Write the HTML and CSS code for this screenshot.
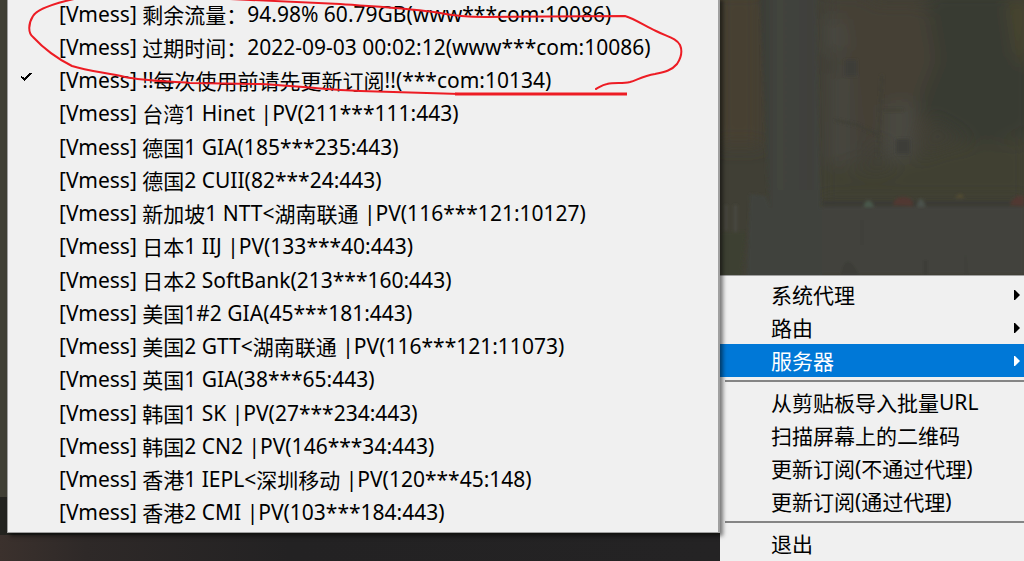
FILE: index.html
```html
<!DOCTYPE html>
<html lang="zh-CN">
<head>
<meta charset="utf-8">
<meta name="viewport" content="width=device-width, initial-scale=1">
<title>服务器</title>
<link rel="stylesheet" href="styles.css">
</head>
<body>
<main class="desktop">
  <svg class="wallpaper" viewBox="0 0 1024 561" preserveAspectRatio="none" aria-hidden="true">
    <defs>
      <filter id="soft" x="-10%" y="-10%" width="120%" height="120%"><feGaussianBlur stdDeviation="9"/></filter>
      <filter id="fine"><feGaussianBlur stdDeviation="1.5"/></filter>
      <linearGradient id="floor"><stop offset="0" stop-color="#3b312d"/><stop offset=".12" stop-color="#2e2928"/><stop offset=".4" stop-color="#232223"/><stop offset="1" stop-color="#242324"/></linearGradient>
      <linearGradient id="trunk"><stop offset="0" stop-color="#3a3c35"/><stop offset=".3" stop-color="#42443e"/><stop offset=".8" stop-color="#3f403b"/><stop offset="1" stop-color="#42443d"/></linearGradient>
    </defs>
    <rect width="1024" height="561" fill="#403f35"/>
    <g filter="url(#soft)">
      <rect x="715" y="-10" width="48" height="155" fill="#474132"/>
      <path d="M822-10h50l-4 70 8 100-55 10z" fill="#434139"/>
      <path d="M832 0h90l30 60-35 90-50-10z" fill="#444034"/>
      <path d="M824 20l18-2 6 30-18 8zM834 75l14-5v100l-14-10zM885 105l28-5v60h-28z" fill="#484a43"/>
      <path d="M925-10h110v145l-60 10-58-35 20-50z" fill="#383a33"/>
      <path d="M1008 0h20v70l-12-15z" fill="#4c462f"/>
      <path d="M820 165l60 5 70-25 80-5v60H820z" fill="#413f32"/>
    </g>
    <g filter="url(#fine)">
      <path d="M760-5h56l6 300h-46l-9-120z" fill="url(#trunk)"/>
      <path d="M845 60h12v16h-12zM896 139h14v15h-14z" fill="#3d3e37"/>
      <path d="M882 75l-4 82M883 110h20M835 120l22 5 22 10" fill="none" stroke="#3d3d34" stroke-width="2"/>
      <path d="M822 207h202v67H822z" fill="#42433c"/>
      <path d="M750 194l16 2 4 12h52v70h-75z" fill="#41423c"/>
      <path d="M776 190h44v90h-38z" fill="#41433e"/>
      <path d="M822 201h202v5H822z" fill="#3b3b34"/>
      <path d="M864 205q5-10 10 2h-10z" fill="#49584b"/>
      <path d="M893 205q2-9 11-8 9 0 9 9zM1010 205q5-12 14-9v10z" fill="#513830"/>
      <path d="M917 206q3-14 8-1v2h-8z" fill="#4b514b"/>
      <path d="M955 198q6-8 9 0z" fill="#524c32"/>
      <path d="M725 205h2v25h-2zM734 205h3v30h-3z" fill="#484943"/>
      <path d="M721 232h25l-5 45h-20z" fill="#3e4132"/>
      <path d="M861 220h2v25h-2zM840 276q6-30 20 0zM965 245l3 30h-3zM923 260h5v16h-5z" fill="#3d3e37"/>
    </g>
    <rect y="497" width="720" height="38" fill="#23231f"/>
    <rect y="535" width="720" height="26" fill="url(#floor)"/>
  </svg>

  <ul class="menu servers" role="menu" aria-label="服务器">
    <li><button class="item" type="button"><span class="latin">[Vmess] </span>剩余流量：<span class="latin">94.98% 60.79GB(www***com:10086)</span></button></li>
    <li><button class="item" type="button"><span class="latin">[Vmess] </span>过期时间：<span class="latin">2022-09-03 00:02:12(www***com:10086)</span></button></li>
    <li><button class="item" type="button" role="menuitemradio" aria-checked="true"><svg class="check" viewBox="0 0 11 10" aria-hidden="true"><path d="M0 4h1v1h2v1h1V5h1V4h1V3h1V2h1V1h3v1h-1v1H9v1H8v1H7v1H6v1H5v1H4v1H3V8H2V7H1V6H0z"/></svg><span class="latin">[Vmess] !!</span>每次使用前请先更新订阅<span class="latin">!!(***com:10134)</span></button></li>
    <li><button class="item" type="button"><span class="latin">[Vmess] </span>台湾<span class="latin">1 Hinet |PV(211***111:443)</span></button></li>
    <li><button class="item" type="button"><span class="latin">[Vmess] </span>德国<span class="latin">1 GIA(185***235:443)</span></button></li>
    <li><button class="item" type="button"><span class="latin">[Vmess] </span>德国<span class="latin">2 CUII(82***24:443)</span></button></li>
    <li><button class="item" type="button"><span class="latin">[Vmess] </span>新加坡<span class="latin">1 NTT&lt;</span>湖南联通<span class="latin"> |PV(116***121:10127)</span></button></li>
    <li><button class="item" type="button"><span class="latin">[Vmess] </span>日本<span class="latin">1 IIJ |PV(133***40:443)</span></button></li>
    <li><button class="item" type="button"><span class="latin">[Vmess] </span>日本<span class="latin">2 SoftBank(213***160:443)</span></button></li>
    <li><button class="item" type="button"><span class="latin">[Vmess] </span>美国<span class="latin">1#2 GIA(45***181:443)</span></button></li>
    <li><button class="item" type="button"><span class="latin">[Vmess] </span>美国<span class="latin">2 GTT&lt;</span>湖南联通<span class="latin"> |PV(116***121:11073)</span></button></li>
    <li><button class="item" type="button"><span class="latin">[Vmess] </span>英国<span class="latin">1 GIA(38***65:443)</span></button></li>
    <li><button class="item" type="button"><span class="latin">[Vmess] </span>韩国<span class="latin">1 SK |PV(27***234:443)</span></button></li>
    <li><button class="item" type="button"><span class="latin">[Vmess] </span>韩国<span class="latin">2 CN2 |PV(146***34:443)</span></button></li>
    <li><button class="item" type="button"><span class="latin">[Vmess] </span>香港<span class="latin">1 IEPL&lt;</span>深圳移动<span class="latin"> |PV(120***45:148)</span></button></li>
    <li><button class="item" type="button"><span class="latin">[Vmess] </span>香港<span class="latin">2 CMI |PV(103***184:443)</span></button></li>
  </ul>

  <ul class="menu tray" role="menu" aria-label="托盘菜单">
    <li><button class="item" type="button">系统代理<svg class="arrow" viewBox="0 0 6 10" aria-hidden="true"><path d="M0 0h1l5 5-5 5H0z"/></svg></button></li>
    <li><button class="item" type="button">路由<svg class="arrow" viewBox="0 0 6 10" aria-hidden="true"><path d="M0 0h1l5 5-5 5H0z"/></svg></button></li>
    <li><button class="item selected" type="button">服务器<svg class="arrow" viewBox="0 0 6 10" aria-hidden="true"><path d="M0 0h1l5 5-5 5H0z"/></svg></button></li>
    <li class="separator" role="separator"></li>
    <li><button class="item" type="button">从剪贴板导入批量<span class="latin">URL</span></button></li>
    <li><button class="item" type="button">扫描屏幕上的二维码</button></li>
    <li><button class="item" type="button">更新订阅<span class="latin">(</span>不通过代理<span class="latin">)</span></button></li>
    <li><button class="item" type="button">更新订阅<span class="latin">(</span>通过代理<span class="latin">)</span></button></li>
    <li class="separator" role="separator"></li>
    <li><button class="item" type="button">退出</button></li>
  </ul>

  <svg class="marker" viewBox="0 0 720 110" aria-hidden="true">
    <path d="M74-1C52 4 37 9 33 16C28 24 28 33 33 37C45 50 58 59 72 66C88 71 108 73 125 77C145 81 165 81 190 83L260 84C300 86 330 90 360 91L460 94"/>
    <path class="thick" d="M455 94H627"/>
    <path d="M230-1L340 4C380 7 410 8 440 13C455 16 465 17 485 17L625 16C635 19 645 26 656 31C668 37 676 38 680 45C683 52 681 58 677 64C671 71 664 72 655 74C643 76 637 80 630 82C622 84 615 82 607 84C602 85 600 87 596 89"/>
  </svg>
</main>
</body>
</html>
```
FILE: styles.css
```css
* {
  box-sizing: border-box;
}

body {
  margin: 0;
  background: #403f35;
  font-family: "Noto Sans CJK SC", sans-serif;
  font-size: 21px;
  color: #000;
}

.desktop {
  position: relative;
  display: grid;
  grid-template-columns: minmax(0, 1fr) 304px;
  min-height: 100vh;
  overflow: hidden;
}

.wallpaper {
  position: absolute;
  inset: 0;
  width: 100%;
  height: 100%;
}

.menu {
  position: relative;
  margin: 0;
  padding: 0;
  list-style: none;
  background: #f0f0f0;
}

.servers {
  z-index: 1;
  display: grid;
  grid-auto-rows: 1fr;
  margin: -3px 0 28px 7px;
  padding-bottom: 3px;
  border: 1px solid #a0a0a0;
  border-top: 0;
  border-right-width: 2px;
  box-shadow: 3px 3px 4px rgba(0, 0, 0, 0.5);
}

.servers li {
  display: grid;
}

.tray {
  align-self: end;
  padding: 2px 0 1px;
  border-top: 1px solid #a0a0a0;
}

.item {
  display: flex;
  align-items: center;
  width: 100%;
  min-height: 33px;
  padding: 0 4px 0 51px;
  border: 0;
  background: none;
  color: inherit;
  font: inherit;
  line-height: 30px;
  text-align: left;
  white-space: pre;
}

.tray .item {
  padding-bottom: 2px;
}

.latin {
  font-family: "Noto Sans", "Noto Sans CJK SC", sans-serif;
  font-size: 21px;
}

.selected {
  background: #0078d7;
  color: #fff;
}

.separator {
  height: 2px;
  margin: 3px 0 4px 5px;
  background: #858585;
}

.check {
  width: 11px;
  height: 10px;
  margin: 0 27px 6px -38px;
}

.arrow {
  width: 6px;
  height: 10px;
  margin: 2px 0 0 auto;
  fill: currentColor;
}

.marker {
  position: absolute;
  z-index: 2;
  top: 0;
  left: 0;
  width: 720px;
  height: 110px;
  fill: none;
  stroke: #ed1c24;
  stroke-width: 2;
  stroke-linecap: round;
  stroke-linejoin: round;
  pointer-events: none;
}

.thick {
  stroke-width: 3;
  stroke-linecap: butt;
}
```
